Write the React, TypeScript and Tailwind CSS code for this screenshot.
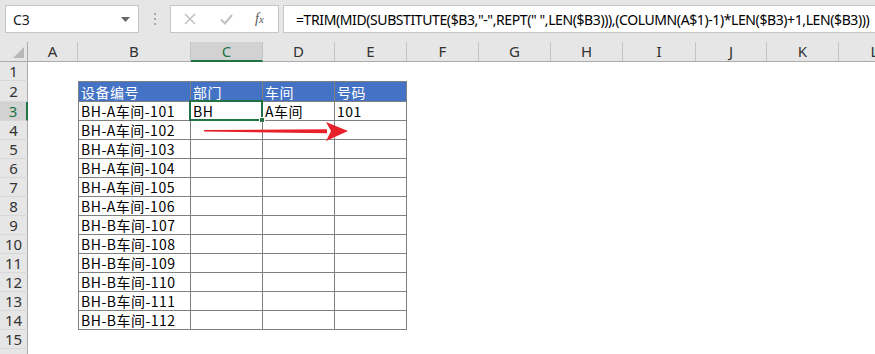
import React from "react";

const cols = [
  { l: "A", w: "w-[50px]" },
  { l: "B", w: "w-[113px]" },
  { l: "C", w: "w-[72px]" },
  { l: "D", w: "w-[72px]" },
  { l: "E", w: "w-[72px]" },
  { l: "F", w: "w-[72px]" },
  { l: "G", w: "w-[72px]" },
  { l: "H", w: "w-[72px]" },
  { l: "I", w: "w-[73px]" },
  { l: "J", w: "w-[71px]" },
  { l: "K", w: "w-[72px]" },
  { l: "L", w: "w-[72px]" },
];

const bValues = [
  "BH-A车间-101",
  "BH-A车间-102",
  "BH-A车间-103",
  "BH-A车间-104",
  "BH-A车间-105",
  "BH-A车间-106",
  "BH-B车间-107",
  "BH-B车间-108",
  "BH-B车间-109",
  "BH-B车间-110",
  "BH-B车间-111",
  "BH-B车间-112",
];

const cellFont = "font-['Noto_Sans_CJK_SC',sans-serif] text-[14px] leading-none tracking-[0.5px]";
const hdrFont = "font-['Noto_Sans',sans-serif] text-[15px] leading-none";

function RowHeader({ n, tall }: { n: number; tall?: boolean }) {
  const sel = n === 3;
  return (
    <div
      className={`w-[28px] shrink-0 ${tall ? "h-[21px]" : "h-[19px]"} flex items-center justify-center border-b border-b-[#d8d8d8] ${
        sel
          ? "bg-[#d2d2d2] text-[#217346] border-r-2 border-r-[#217346]"
          : "bg-[#e6e6e6] text-[#333] border-r border-r-[#ababab]"
      } ${hdrFont}`}
    >
      {n}
    </div>
  );
}

function EmptyCells({ from }: { from: number }) {
  return (
    <>
      {cols.slice(from).map((c) => (
        <div key={c.l} className={`${c.w} shrink-0`} />
      ))}
    </>
  );
}

export default function App() {
  const rows = [];
  rows.push(
    <div key={1} className="flex h-[19px]">
      <RowHeader n={1} />
      <EmptyCells from={0} />
    </div>
  );
  rows.push(
    <div key={2} className="flex h-[21px]">
      <RowHeader n={2} tall />
      <div className="w-[50px] shrink-0" />
      {[
        { t: "设备编号", w: "w-[113px] border-l" },
        { t: "部门", w: "w-[72px]" },
        { t: "车间", w: "w-[72px]" },
        { t: "号码", w: "w-[72px]" },
      ].map((h) => (
        <div
          key={h.t}
          className={`${h.w} shrink-0 h-[21px] bg-[#4472c4] text-white border-t border-r border-b border-[#7f7f7f] flex items-center pl-[2px] pt-[1px] ${cellFont}`}
        >
          {h.t}
        </div>
      ))}
      <EmptyCells from={5} />
    </div>
  );
  bValues.forEach((v, i) => {
    const r = i + 3;
    const first = r === 3;
    rows.push(
      <div key={r} className="flex h-[19px]">
        <RowHeader n={r} />
        <div className="w-[50px] shrink-0" />
        <div className={`w-[113px] shrink-0 h-[19px] border-l border-r border-b border-[#7f7f7f] flex items-center pl-[2px] text-black ${cellFont}`}>
          {v}
        </div>
        <div className={`relative w-[72px] shrink-0 h-[19px] border-r border-b border-[#7f7f7f] flex items-center pl-[2px] text-black ${cellFont}`}>
          {first ? "BH" : ""}
          {first && (
            <div className="absolute left-[-2px] top-[-2px] w-[74px] h-[21px] border-2 border-[#217346]">
              <div className="absolute right-[-4px] bottom-[-4px] w-[6px] h-[6px] bg-[#217346] border border-white" />
            </div>
          )}
        </div>
        <div className={`w-[72px] shrink-0 h-[19px] border-r border-b border-[#7f7f7f] flex items-center pl-[2px] text-black ${cellFont}`}>
          {first ? "A车间" : ""}
        </div>
        <div className={`w-[72px] shrink-0 h-[19px] border-r border-b border-[#7f7f7f] flex items-center pl-[2px] text-black ${cellFont}`}>
          {first ? "101" : ""}
        </div>
        <EmptyCells from={5} />
      </div>
    );
  });
  [15, 16].forEach((r) =>
    rows.push(
      <div key={r} className="flex h-[19px]">
        <RowHeader n={r} />
        <EmptyCells from={0} />
      </div>
    )
  );

  return (
    <div className="relative w-[875px] h-[354px] overflow-hidden bg-white">
      {/* toolbar */}
      <div className="h-[42px] bg-[#e6e6e6] flex items-start pt-[5px] pl-[5px]">
        <div className="w-[134px] shrink-0 h-[28px] bg-white border border-[#c6c6c6] flex items-center justify-between pl-[7px] pr-[8px]">
          <span className="font-['Noto_Sans',sans-serif] text-[14px] text-[#222]">C3</span>
          <svg width="9" height="5" viewBox="0 0 9 5">
            <path d="M0 0 L9 0 L4.5 5 Z" fill="#666" />
          </svg>
        </div>
        <div className="w-[31px] shrink-0 h-[28px] flex flex-col items-center justify-center gap-[3px]">
          <div className="w-[2px] h-[2px] bg-[#a8a8a8]" />
          <div className="w-[2px] h-[2px] bg-[#a8a8a8]" />
          <div className="w-[2px] h-[2px] bg-[#a8a8a8]" />
        </div>
        <div className="w-[109px] shrink-0 h-[28px] bg-white border border-[#c6c6c6] flex items-center">
          <svg className="ml-[13px]" width="12" height="12" viewBox="0 0 12 12">
            <path d="M1 1 L11 11 M11 1 L1 11" stroke="#c2c2c2" strokeWidth="1.6" />
          </svg>
          <svg className="ml-[24px]" width="13" height="11" viewBox="0 0 13 11">
            <path d="M1 5.5 L5 9.5 L12 1" stroke="#c2c2c2" strokeWidth="2" fill="none" />
          </svg>
          <span className="ml-[22px] font-['Liberation_Serif',serif] italic text-[14px] text-[#555] leading-none">
            f<span className="text-[11px]">x</span>
          </span>
        </div>
        <div className="ml-[4px] flex-1 min-w-0 overflow-hidden h-[28px] bg-white border border-[#c6c6c6] border-r-0 flex items-center pl-[12px]">
          <span className="font-['Noto_Sans',sans-serif] text-[14px] text-black whitespace-nowrap tracking-[-0.4px]">
            =TRIM(MID(SUBSTITUTE($B3,"-",REPT(" ",LEN($B3))),(COLUMN(A$1)-1)*LEN($B3)+1,LEN($B3)))
          </span>
        </div>
      </div>
      {/* column header */}
      <div className="flex h-[20px] bg-[#e6e6e6] border-b border-[#ababab]">
        <div className="w-[28px] shrink-0 border-r border-[#ababab] relative">
          <svg className="absolute right-[3px] bottom-[3px]" width="11" height="11" viewBox="0 0 11 11">
            <path d="M11 0 L11 11 L0 11 Z" fill="#b8b8b8" />
          </svg>
        </div>
        {cols.map((c) => {
          const sel = c.l === "C";
          return (
            <div
              key={c.l}
              className={`${c.w} shrink-0 flex items-center justify-center border-r border-[#c4c4c4] ${hdrFont} ${
                sel ? "bg-[#d2d2d2] text-[#217346] border-b-2 border-b-[#217346] h-[20px]" : "text-[#333]"
              }`}
            >
              {c.l}
            </div>
          );
        })}
      </div>
      {rows}
      {/* arrow */}
      <svg className="absolute left-0 top-0 pointer-events-none" width="875" height="354" viewBox="0 0 875 354">
        <path d="M204 130 L327 129.2 L327 133.2 L204 131.4 Z" fill="#e8202a" />
        <path d="M326 122 L348 131 L326 141 L331 131 Z" fill="#e8202a" />
      </svg>
    </div>
  );
}
